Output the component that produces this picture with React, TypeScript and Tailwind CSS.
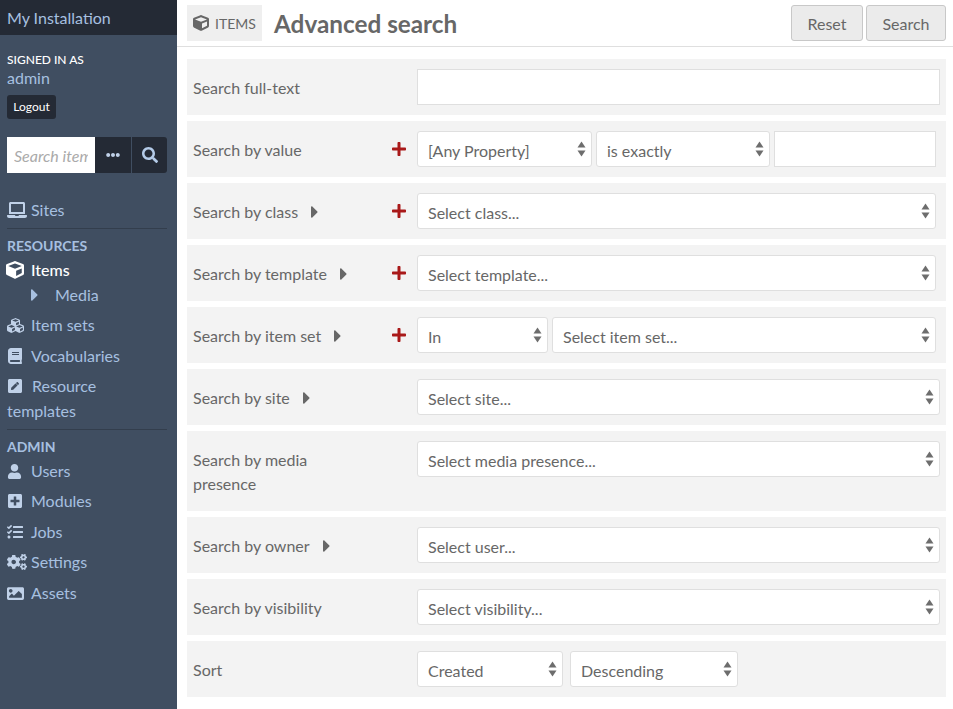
import React from "react";
import { FaLaptop, FaCube, FaCubes, FaBook, FaPenSquare, FaUser, FaPlusSquare, FaTasks, FaCogs, FaImage, FaSearch, FaEllipsisH, FaCaretRight, FaPlus } from "react-icons/fa";

function Sel({ label, className }: { label: string; className: string }) {
  return (
    <div className={"relative h-[36px] rounded-[3px] border border-[#dfdfdf] bg-white " + className}>
      <select className="h-full w-full appearance-none bg-transparent pl-[10px] pr-6 pt-[4px] text-[16px] leading-[24px] text-[#676767] outline-none">
        <option>{label}</option>
      </select>
      <svg className="pointer-events-none absolute right-[5px] top-[9px]" width="9" height="16" viewBox="0 0 9 16" fill="#6d6d6d">
        <path d="M4.5 0.5L8.5 6.5H0.5Z" />
        <path d="M4.5 15.5L8.5 9.5H0.5Z" />
      </svg>
    </div>
  );
}

function Row({ label, caret, plus, h = "h-[56px]", top, labelW = "", children }: { label: string; caret?: boolean; plus?: boolean; h?: string; top?: boolean; labelW?: string; children: React.ReactNode }) {
  return (
    <div className={"flex bg-[#f3f3f3] " + h + (top ? " items-start pt-[10px]" : " items-center")}>
      <div className={"flex w-[230px] shrink-0 pl-[6px] text-[16px] leading-[24px] text-[#676767] " + (top ? "pt-[7px]" : "pt-[2px]")}>
        <div className={"flex items-center " + labelW}>
          <span>{label}</span>
          {caret && <FaCaretRight className="ml-[13px] text-[20px] text-[#676767]" preserveAspectRatio="xMinYMid" />}
        </div>
      </div>
      <div className="relative flex flex-1 gap-[4px] pr-[6px]">
        {plus && <FaPlus className="absolute left-[-26px] top-[10px] text-[16px] text-[#a91919]" />}
        {children}
      </div>
    </div>
  );
}

function Nav({ icon, label, mt = "mt-[6px]" }: { icon: React.ReactNode; label: string; mt?: string }) {
  return (
    <div className={"flex h-[24px] items-center " + mt}>
      <span className="flex w-[24px] shrink-0 items-center text-[#c0d1e8]">{icon}</span>
      <span>{label}</span>
    </div>
  );
}

export default function App() {
  return (
    <div className="flex h-[709px] w-[953px] overflow-hidden bg-white font-['Lato','Liberation_Sans',sans-serif]">
      <aside className="w-[177px] shrink-0 bg-[#404e61] text-[16px] leading-[24px] text-[#a7c0e0]">
        <div className="flex h-[35px] items-center bg-[#242a35] px-[7px] text-[16px]">My Installation</div>
        <div className="px-[7px] pt-[15px]">
          <div className="text-[12px] font-medium leading-[20px] text-white">SIGNED IN AS</div>
          <div className="-mt-[1px] text-[16px] leading-[18px]">admin</div>
          <button className="mt-[8px] block h-[24px] w-[49px] rounded-[3px] bg-[#242a35] text-center text-[12px] leading-[24px] text-white">Logout</button>
          <div className="mt-[18px] flex h-[36px] w-[160px]">
            <input readOnly placeholder="Search items" className="h-full w-[88px] bg-white px-[7px] text-[16px] italic text-[#676767] outline-none placeholder:text-[#aaaaaa]" />
            <button className="flex h-full w-[36px] items-center justify-center bg-[#242a35] text-[14px] text-[#c0d1e8]"><FaEllipsisH /></button>
            <button className="ml-[1px] flex h-full w-[35px] items-center justify-center rounded-r-[3px] bg-[#242a35] text-[16px] text-[#b4cbe8]"><FaSearch /></button>
          </div>
          <Nav icon={<FaLaptop className="text-[20px]" />} label="Sites" mt="mt-[25px]" />
          <div className="mt-[6px] h-px w-[160px] bg-[#333e4d]" />
          <div className="mt-[6px] text-[14px] font-bold leading-[22px]">RESOURCES</div>
          <div className="flex h-[26px] items-center font-medium text-white">
            <span className="flex w-[24px] shrink-0 items-center"><FaCube className="-ml-[1px] text-[18px]" /></span>
            <span>Items</span>
          </div>
          <div className="flex h-[24px] items-center pl-[24px]">
            <FaCaretRight className="w-[24px] shrink-0 text-[20px]" preserveAspectRatio="xMinYMid" />
            <span>Media</span>
          </div>
          <Nav icon={<FaCubes className="text-[17px]" />} label="Item sets" />
          <Nav icon={<FaBook className="text-[16px]" />} label="Vocabularies" mt="mt-[7px]" />
          <div className="mt-[5px] w-[120px] leading-[25px]">
            <FaPenSquare className="mr-[9px] inline-block align-[-2px] text-[16px] text-[#c0d1e8]" />Resource templates
          </div>
          <div className="mt-[6px] h-px w-[160px] bg-[#333e4d]" />
          <div className="mt-[6px] text-[14px] font-bold leading-[22px]">ADMIN</div>
          <Nav icon={<FaUser className="text-[15px]" />} label="Users" mt="mt-[1px]" />
          <Nav icon={<FaPlusSquare className="text-[16px]" />} label="Modules" />
          <Nav icon={<FaTasks className="text-[16px]" />} label="Jobs" mt="mt-[7px]" />
          <Nav icon={<FaCogs className="text-[20px]" />} label="Settings" />
          <Nav icon={<FaImage className="text-[17px]" />} label="Assets" mt="mt-[7px]" />
        </div>
      </aside>
      <main className="flex min-w-0 flex-1 flex-col">
        <header className="flex h-[47px] shrink-0 items-start border-b border-[#dfdfdf] pl-[10px] pr-[7px] pt-[5px]">
          <div className="flex h-[36px] w-[75px] items-center bg-[#efefef] pl-[6px] text-[14px] text-[#676767]">
            <FaCube className="mr-[6px] text-[16px]" />
            ITEMS
          </div>
          <h1 className="ml-[12px] text-[24.3px] font-bold leading-[38px] text-[#676767]">Advanced search</h1>
          <div className="ml-auto flex gap-[3px]">
            <button className="h-[36px] w-[72px] rounded-[3px] border border-[#c8c8c8] bg-[#ebebeb] pt-[2px] text-[16px] text-[#676767]">Reset</button>
            <button className="h-[36px] w-[80px] rounded-[3px] border border-[#c8c8c8] bg-[#ebebeb] pt-[2px] text-[16px] text-[#676767]">Search</button>
          </div>
        </header>
        <div className="flex flex-col gap-[6px] pl-[10px] pr-[7px] pt-[12px]">
          <Row label="Search full-text">
            <input readOnly className="h-[36px] w-full border border-[#dfdfdf] bg-white" />
          </Row>
          <Row label="Search by value" plus>
            <Sel label="[Any Property]" className="w-[175px]" />
            <Sel label="is exactly" className="w-[174px]" />
            <input readOnly className="h-[36px] w-[162px] border border-[#dfdfdf] bg-white" />
            <div className="w-[4px]" />
          </Row>
          <Row label="Search by class" caret plus>
            <Sel label="Select class..." className="w-[519px]" />
          </Row>
          <Row label="Search by template" caret plus>
            <Sel label="Select template..." className="w-[519px]" />
          </Row>
          <Row label="Search by item set" caret plus>
            <Sel label="In" className="w-[131px]" />
            <Sel label="Select item set..." className="w-[384px]" />
          </Row>
          <Row label="Search by site" caret>
            <Sel label="Select site..." className="flex-1" />
          </Row>
          <Row label="Search by media presence" h="h-[80px]" top labelW="w-[160px]">
            <Sel label="Select media presence..." className="flex-1" />
          </Row>
          <Row label="Search by owner" caret>
            <Sel label="Select user..." className="flex-1" />
          </Row>
          <Row label="Search by visibility">
            <Sel label="Select visibility..." className="flex-1" />
          </Row>
          <Row label="Sort">
            <Sel label="Created" className="w-[146px]" />
            <Sel label="Descending" className="ml-[3px] w-[168px]" />
          </Row>
        </div>
      </main>
    </div>
  );
}
